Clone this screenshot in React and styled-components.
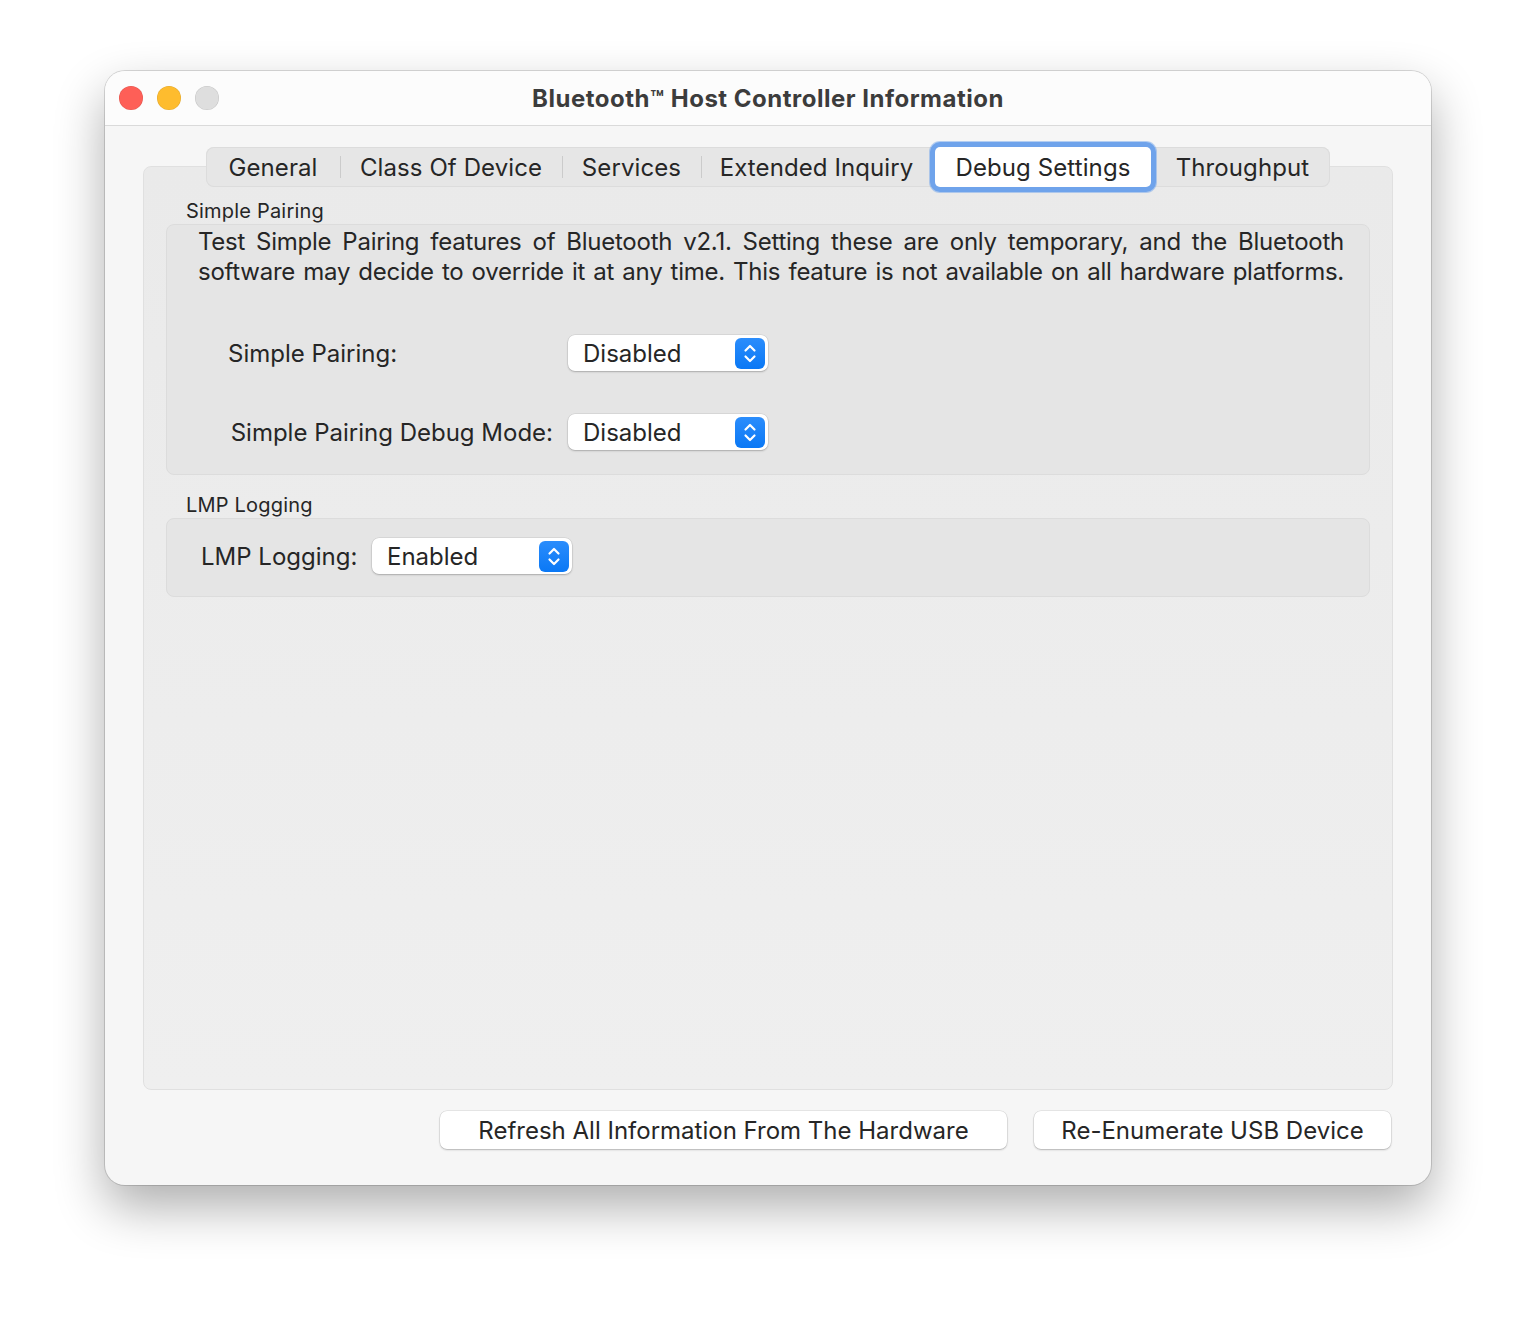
import React from 'react';
import styled, { createGlobalStyle } from 'styled-components';

const GlobalStyle = createGlobalStyle`
  html, body {
    margin: 0;
    padding: 0;
    background: #ffffff;
  }
  body {
    font-family: "Inter", "Noto Sans", "Liberation Sans", sans-serif;
    color: #262626;
    -webkit-font-smoothing: antialiased;
  }
`;

const Page = styled.div`
  width: 1536px;
  height: 1324px;
  padding: 71px 0 0 105px;
  box-sizing: border-box;
`;

const Window = styled.div`
  width: 1326px;
  height: 1114px;
  border-radius: 20px;
  background: #f6f6f6;
  box-shadow: 0 0 0 1px rgba(0, 0, 0, 0.14), 0 22px 50px rgba(0, 0, 0, 0.32);
  overflow: hidden;
  display: flex;
  flex-direction: column;
`;

const TitleBar = styled.div`
  height: 54px;
  flex: none;
  background: #fcfcfc;
  border-bottom: 1px solid #dadada;
  display: grid;
  grid-template-columns: 1fr auto 1fr;
  align-items: center;
`;

const Lights = styled.div`
  display: flex;
  gap: 14px;
  padding-left: 14px;
`;

const Light = styled.span`
  width: 24px;
  height: 24px;
  border-radius: 50%;
  background: ${(p) => p.color};
  box-shadow: inset 0 0 0 0.5px rgba(0, 0, 0, 0.12);
`;

const Title = styled.div`
  font-size: 24px;
  font-weight: 700;
  color: #3c3c3c;
  letter-spacing: 0.5px;
`;

const Trademark = styled.span`
  font-size: 22px;
  vertical-align: 1px;
`;

const Body = styled.div`
  flex: 1;
  padding: 21px 38px 0;
  display: flex;
  flex-direction: column;
`;

const TabBar = styled.div`
  align-self: center;
  position: relative;
  z-index: 1;
  display: flex;
  height: 40px;
  border-radius: 8px;
  background: #e6e6e6;
  box-shadow: inset 0 0 0 1px #dcdcdc;
`;

const Tab = styled.div`
  width: ${(p) => p.w}px;
  position: relative;
  display: flex;
  align-items: center;
  justify-content: center;
  font-size: 24px;
  color: #262626;
  letter-spacing: 0.1px;
  white-space: nowrap;

  ${(p) =>
    p.sep &&
    `
    &::before {
      content: '';
      position: absolute;
      left: 0;
      top: 9px;
      height: 22px;
      width: 1px;
      background: #cbcbcb;
    }
  `}
`;

const Selected = styled.div`
  flex: 1;
  align-self: stretch;
  margin: 0 4px 0 3px;
  display: flex;
  align-items: center;
  justify-content: center;
  background: #ffffff;
  border-radius: 5px;
  box-shadow: 0 0 0 5px #6fa3eb, 0 0 0 6px rgba(111, 163, 235, 0.5);
`;

const TabBox = styled.div`
  margin-top: -21px;
  height: 924px;
  box-sizing: border-box;
  border: 1px solid #e0e0e0;
  border-radius: 8px;
  background: linear-gradient(#eaeaea, #efefef);
  padding: 32px 22px;
  display: flex;
  flex-direction: column;
`;

const GroupLabel = styled.div`
  font-size: 20px;
  line-height: 24px;
  margin: ${(p) => p.mt || 0}px 0 1px 20px;
  color: #262626;
  letter-spacing: 0.2px;
`;

const Group = styled.div`
  border: 1px solid #dcdcdc;
  border-radius: 8px;
  background: #e5e5e5;
  padding: ${(p) => p.pad};
`;

const Description = styled.div`
  padding: 0 25px 0 31px;
  font-size: 24px;
  line-height: 30px;
  letter-spacing: -0.25px;
`;

const Line = styled.div`
  text-align: justify;
  text-align-last: justify;
  white-space: nowrap;
`;

const Rows = styled.div`
  margin: 48px 0 0 61px;
  display: grid;
  grid-template-columns: 325px 200px;
  column-gap: 15px;
  row-gap: 43px;
  align-items: center;
`;

const FieldLabel = styled.div`
  font-size: 24px;
  white-space: nowrap;
  justify-self: ${(p) => p.align || 'start'};
`;

const InlineRow = styled.div`
  display: grid;
  grid-template-columns: 156px 200px;
  column-gap: 15px;
  align-items: center;
  padding-left: 34px;
`;

const Popup = styled.div`
  width: 200px;
  height: 36px;
  box-sizing: border-box;
  background: #ffffff;
  border-radius: 7px;
  box-shadow: 0 0 0 0.5px rgba(0, 0, 0, 0.1), 0 1px 2px rgba(0, 0, 0, 0.22);
  display: flex;
  align-items: center;
  justify-content: space-between;
  padding: 0 3px 0 15px;
  font-size: 24px;
`;

const Stepper = styled.div`
  width: 30px;
  height: 31px;
  border-radius: 6px;
  background: linear-gradient(#2b8dfc, #0a78f5);
  display: flex;
  align-items: center;
  justify-content: center;
`;

const Footer = styled.div`
  display: flex;
  justify-content: flex-end;
  gap: 27px;
  padding: 21px 2px 0 0;
`;

const Button = styled.div`
  width: ${(p) => p.w}px;
  height: 38px;
  box-sizing: border-box;
  background: #ffffff;
  border-radius: 7px;
  box-shadow: 0 0 0 0.5px rgba(0, 0, 0, 0.12), 0 1px 2px rgba(0, 0, 0, 0.22);
  display: flex;
  align-items: center;
  justify-content: center;
  font-size: 24px;
  color: #262626;
  white-space: nowrap;
`;

const Chevrons = () => (
  <svg width="30" height="31" viewBox="0 0 30 31">
    <path d="M10.5 12.5 L15 8 L19.5 12.5" fill="none" stroke="#fff" strokeWidth="2.2" strokeLinecap="round" strokeLinejoin="round" />
    <path d="M10.5 18.5 L15 23 L19.5 18.5" fill="none" stroke="#fff" strokeWidth="2.2" strokeLinecap="round" strokeLinejoin="round" />
  </svg>
);

const PopupButton = ({ value }) => (
  <Popup>
    <span>{value}</span>
    <Stepper>
      <Chevrons />
    </Stepper>
  </Popup>
);

const tabs = [
  { label: 'General', w: 134 },
  { label: 'Class Of Device', w: 222, sep: true },
  { label: 'Services', w: 139, sep: true },
  { label: 'Extended Inquiry', w: 231, sep: true },
  { label: 'Debug Settings', w: 223, selected: true },
  { label: 'Throughput', w: 175 },
];

const App = () => (
  <>
    <GlobalStyle />
    <Page>
      <Window>
        <TitleBar>
          <Lights>
            <Light color="#fe5f57" />
            <Light color="#febc2e" />
            <Light color="#dedede" />
          </Lights>
          <Title>
            Bluetooth<Trademark>™</Trademark> Host Controller Information
          </Title>
          <div />
        </TitleBar>
        <Body>
          <TabBar>
            {tabs.map((t) => (
              <Tab key={t.label} w={t.w} sep={t.sep}>
                {t.selected ? <Selected>{t.label}</Selected> : t.label}
              </Tab>
            ))}
          </TabBar>
          <TabBox>
            <GroupLabel>Simple Pairing</GroupLabel>
            <Group pad="2px 0 24px">
              <Description>
                <Line>
                  Test Simple Pairing features of Bluetooth v2.1. Setting these are only temporary, and the Bluetooth
                </Line>
                <Line>
                  software may decide to override it at any time. This feature is not available on all hardware platforms.
                </Line>
              </Description>
              <Rows>
                <FieldLabel>Simple Pairing:</FieldLabel>
                <PopupButton value="Disabled" />
                <FieldLabel align="end">Simple Pairing Debug Mode:</FieldLabel>
                <PopupButton value="Disabled" />
              </Rows>
            </Group>
            <GroupLabel mt={18}>LMP Logging</GroupLabel>
            <Group pad="19px 0 22px">
              <InlineRow>
                <FieldLabel>LMP Logging:</FieldLabel>
                <PopupButton value="Enabled" />
              </InlineRow>
            </Group>
          </TabBox>
          <Footer>
            <Button w={567}>Refresh All Information From The Hardware</Button>
            <Button w={357}>Re-Enumerate USB Device</Button>
          </Footer>
        </Body>
      </Window>
    </Page>
  </>
);

export default App;
